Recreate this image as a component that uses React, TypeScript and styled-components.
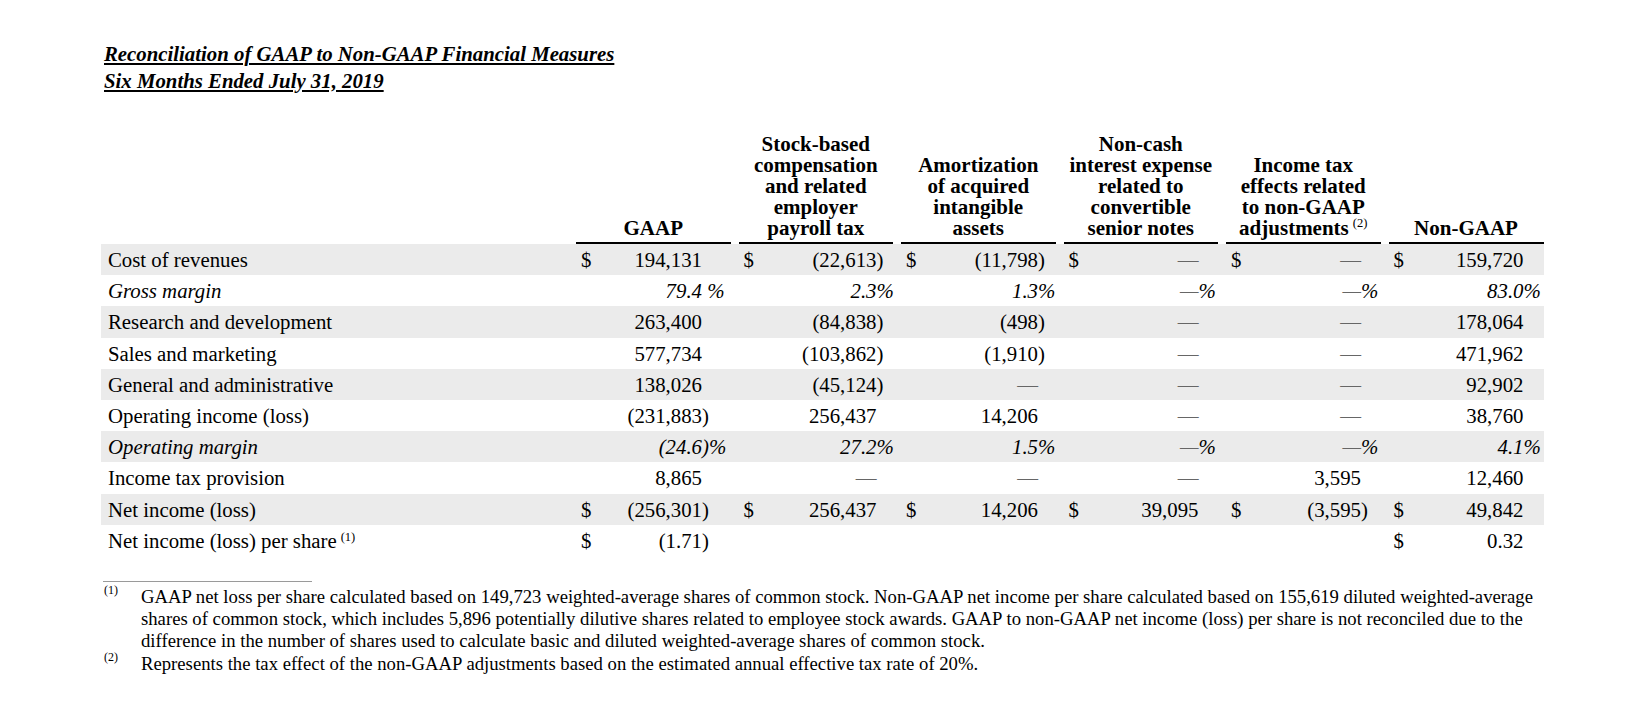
import styled, { createGlobalStyle } from "styled-components";

const GlobalStyle = createGlobalStyle`
  body {
    margin: 0;
    background: #fff;
  }
`;

// label | (number area, hanging suffix) x 6
const COLS =
  "475px 126px 36.5px 138px 24.5px 137px 25.5px 135px 27.5px 135px 27.5px 135px 20px";

const Page = styled.div`
  width: 1650px;
  box-sizing: border-box;
  padding: 41px 0 0 101px;
  font-family: "Liberation Serif", "Times New Roman", serif;
  color: #000;
`;

const Title = styled.div`
  margin-left: 3px;
  font-weight: bold;
  font-style: italic;
  font-size: 20.8px;
  line-height: 26.5px;
`;

const TitleLine = styled.div`
  span {
    text-decoration: underline;
    text-decoration-thickness: 1.5px;
    text-underline-offset: 2px;
  }
`;

const HeadRow = styled.div`
  display: grid;
  width: max-content;
  grid-template-columns: ${COLS};
  align-items: end;
  margin-top: 40px;
`;

const HeadCell = styled.div<{ $col: number; $last?: boolean }>`
  grid-column: ${(p) => 2 + p.$col * 2} / span 2;
  margin-right: ${(p) => (p.$last ? 0 : 8)}px;
  padding-bottom: 3px;
  border-bottom: 2px solid #000;
  text-align: center;
  font-weight: bold;
  font-size: 21px;
  line-height: 21px;
`;

const Sup = styled.span<{ $lift?: number }>`
  font-size: 12.5px;
  font-weight: normal;
  vertical-align: ${(p) => p.$lift ?? 8}px;
  margin-left: 4px;
  line-height: 0;
`;

const Row = styled.div<{ $shade: boolean; $italic?: boolean }>`
  display: grid;
  width: max-content;
  grid-template-columns: ${COLS};
  height: 31.2px;
  line-height: 31.2px;
  font-size: 20.8px;
  font-style: ${(p) => (p.$italic ? "italic" : "normal")};
  background: ${(p) => (p.$shade ? "#ebebeb" : "transparent")};
  white-space: nowrap;
`;

const Label = styled.div`
  padding-left: 7px;
`;

const Amount = styled.div`
  display: flex;
  justify-content: space-between;
  padding-left: 5px;
`;

const Dash = styled.span`
  color: #666;
`;

const Hang = styled.div`
  white-space: pre;
`;

const Notes = styled.div`
  margin-top: 25px;
  font-size: 18.7px;
  line-height: 22.3px;
  white-space: nowrap;
`;

const Rule = styled.div`
  width: 209px;
  margin: 0 0 4px 2px;
  border-top: 1px solid #9a9a9a;
`;

const Note = styled.div`
  display: grid;
  grid-template-columns: 40px 1fr;
`;

const Mark = styled.div`
  padding-left: 3px;
  font-size: 12px;
  line-height: 9px;
`;

type Cell = { d?: boolean; v?: string };
type Line = { label: string; note?: string; italic?: boolean; cells: Cell[] };

const $ = (v: string): Cell => ({ d: true, v });
const n = (v: string): Cell => ({ v });
const E: Cell = {};

const rows: Line[] = [
  { label: "Cost of revenues", cells: [$("194,131"), $("(22,613)"), $("(11,798)"), $("—"), $("—"), $("159,720")] },
  { label: "Gross margin", italic: true, cells: [n("79.4 %"), n("2.3%"), n("1.3%"), n("—%"), n("—%"), n("83.0%")] },
  { label: "Research and development", cells: [n("263,400"), n("(84,838)"), n("(498)"), n("—"), n("—"), n("178,064")] },
  { label: "Sales and marketing", cells: [n("577,734"), n("(103,862)"), n("(1,910)"), n("—"), n("—"), n("471,962")] },
  { label: "General and administrative", cells: [n("138,026"), n("(45,124)"), n("—"), n("—"), n("—"), n("92,902")] },
  { label: "Operating income (loss)", cells: [n("(231,883)"), n("256,437"), n("14,206"), n("—"), n("—"), n("38,760")] },
  { label: "Operating margin", italic: true, cells: [n("(24.6)%"), n("27.2%"), n("1.5%"), n("—%"), n("—%"), n("4.1%")] },
  { label: "Income tax provision", cells: [n("8,865"), n("—"), n("—"), n("—"), n("3,595"), n("12,460")] },
  { label: "Net income (loss)", cells: [$("(256,301)"), $("256,437"), $("14,206"), $("39,095"), $("(3,595)"), $("49,842")] },
  { label: "Net income (loss) per share", note: "(1)", cells: [$("(1.71)"), E, E, E, E, $("0.32")] },
];

const heads: string[][] = [
  ["GAAP"],
  ["Stock-based", "compensation", "and related", "employer", "payroll tax"],
  ["Amortization", "of acquired", "intangible", "assets"],
  ["Non-cash", "interest expense", "related to", "convertible", "senior notes"],
  ["Income tax", "effects related", "to non-GAAP", "adjustments"],
  ["Non-GAAP"],
];

// split "(24.6)%" into "(24.6" and the part that hangs past the column edge
const split = (v = "") => {
  const m = v.match(/^(.*?)(\)?(?: ?%)?)$/);
  return m ? [m[1], m[2]] : [v, ""];
};

const App = () => {
  return (
    <Page>
      <GlobalStyle />
      <Title>
        <TitleLine><span>Reconciliation of GAAP to Non-GAAP Financial Measures</span></TitleLine>
        <TitleLine><span>Six Months Ended July 31, 2019</span></TitleLine>
      </Title>

      <HeadRow>
        {heads.map((lines, i) => (
          <HeadCell key={i} $col={i} $last={i === heads.length - 1}>
            {lines.map((l, j) => (
              <div key={j}>
                {l}
                {i === 4 && j === lines.length - 1 && <Sup>(2)</Sup>}
              </div>
            ))}
          </HeadCell>
        ))}
      </HeadRow>

      {rows.map((r, i) => (
        <Row key={r.label} $shade={i % 2 === 0} $italic={r.italic}>
          <Label>
            {r.label}
            {r.note && <Sup $lift={7}>{r.note}</Sup>}
          </Label>
          {r.cells.map((c, j) => {
            const [main, tail] = split(c.v);
            return [
              <Amount key={`a${j}`}>
                <span>{c.d ? "$" : ""}</span>
                {main === "—" ? <Dash>{main}</Dash> : <span>{main}</span>}
              </Amount>,
              <Hang key={`h${j}`}>{tail}</Hang>,
            ];
          })}
        </Row>
      ))}

      <Notes>
        <Rule />
        <Note>
          <Mark>(1)</Mark>
          <div>
            GAAP net loss per share calculated based on 149,723 weighted-average shares of common stock. Non-GAAP net income per share calculated based on 155,619 diluted weighted-average
            <br />
            shares of common stock, which includes 5,896 potentially dilutive shares related to employee stock awards. GAAP to non-GAAP net income (loss) per share is not reconciled due to the
            <br />
            difference in the number of shares used to calculate basic and diluted weighted-average shares of common stock.
          </div>
        </Note>
        <Note>
          <Mark>(2)</Mark>
          <div>Represents the tax effect of the non-GAAP adjustments based on the estimated annual effective tax rate of 20%.</div>
        </Note>
      </Notes>
    </Page>
  );
};

export default App;
